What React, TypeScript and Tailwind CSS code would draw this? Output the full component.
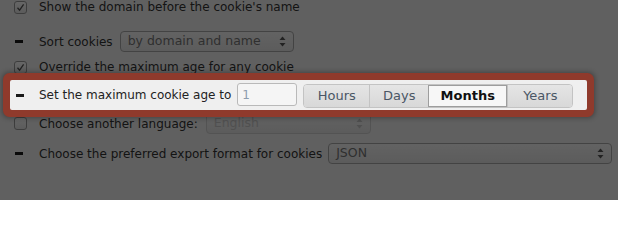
import React from "react";

function Check({ checked }: { checked?: boolean }) {
  return (
    <div className="shrink-0 w-[13px] h-[13px] rounded-[3px] border border-[#9a9a9a] bg-gradient-to-b from-[#ffffff] to-[#e4e4e4] flex items-center justify-center">
      {checked && (
        <svg width="9" height="9" viewBox="0 0 9 9">
          <path d="M1.5 4.8 L3.6 7.2 L7.6 1.4" fill="none" stroke="#555" strokeWidth="1.3" />
        </svg>
      )}
    </div>
  );
}

function Dash() {
  return (
    <div className="shrink-0 w-[13px] flex">
      <div className="ml-[1px] w-[8px] h-[3px] bg-[#1a1a1a]" />
    </div>
  );
}

function Arrows({ color }: { color: string }) {
  return (
    <svg width="7" height="11" viewBox="0 0 7 11">
      <path d="M3.5 0.5 L6.5 4 L0.5 4 Z" fill={color} />
      <path d="M3.5 10.5 L6.5 7 L0.5 7 Z" fill={color} />
    </svg>
  );
}

function Select({ label, width, disabled }: { label: string; width: string; disabled?: boolean }) {
  return (
    <div
      className={`shrink-0 ${width} h-[21px] rounded-[4px] border bg-gradient-to-b from-[#f6f6f6] to-[#e6e6e6] flex items-center justify-between pl-[7px] pr-[7px] text-[12.5px] ${
        disabled ? "text-[#c8c8c8] border-[#cfcfcf]" : "text-[#777] border-[#a8a8a8]"
      }`}
    >
      <span>{label}</span>
      <Arrows color={disabled ? "#c6c6c6" : "#555"} />
    </div>
  );
}

const units = ["Hours", "Days", "Months", "Years"];

export default function App() {
  return (
    <div
      className="relative w-[618px] h-[200px] overflow-hidden bg-[#f0f0f0] text-[12px] text-[#333] whitespace-nowrap"
      style={{ fontFamily: '"DejaVu Sans", sans-serif' }}
    >
      <div className="flex flex-col pl-[14px]">
        <div className="mt-[-5px] h-[24px] flex items-center gap-[12px]">
          <Check checked />
          <span>Show the domain before the cookie's name</span>
        </div>
        <div className="mt-[9px] h-[27px] flex items-center gap-[12px]">
          <Dash />
          <span>Sort cookies</span>
          <div className="-ml-[5px]">
            <Select label="by domain and name" width="w-[174px]" />
          </div>
        </div>
        <div className="h-[24px] flex items-center gap-[12px]">
          <Check checked />
          <span>Override the maximum age for any cookie</span>
        </div>

        <div className="relative z-20 -ml-[4px] mt-[1px] w-[577px] h-[30px] pl-[5px] flex items-center rounded-[2px] bg-[#efefef] shadow-[0_0_0_7px_#8f3a2c,0_0_5px_8px_rgba(0,0,0,0.3)]">
          <Dash />
          <span className="ml-[11px] text-[#222]">Set the maximum cookie age to</span>
          <div className="shrink-0 ml-[6px] w-[60px] h-[23px] -mt-[1px] rounded-[3px] border border-[#b9b9b9] bg-[#f5f5f5] flex items-center pl-[4px] text-[#8d9cae]">
            1
          </div>
          <div className="shrink-0 ml-[6px] mt-[2px] h-[24px] flex rounded-[4px] border border-[#c3c3c3] overflow-hidden text-[13px]">
            {units.map((u, i) => {
              const active = u === "Months";
              const w = ["w-[65px]", "w-[59px]", "w-[79px]", "w-[65px]"][i];
              return (
                <div
                  key={u}
                  className={`${w} flex items-center justify-center ${i > 0 ? "border-l" : ""} ${
                    active
                      ? "bg-[#f7f7f7] border border-[#9d9d9d] font-bold text-[#111]"
                      : "bg-gradient-to-b from-[#e5e5e5] to-[#d8d8d8] border-[#c3c3c3] text-[#4a5665]"
                  }`}
                >
                  {u}
                </div>
              );
            })}
          </div>
        </div>

        <div className="mt-[1px] h-[25px] flex items-center gap-[12px]">
          <Check />
          <span>Choose another language:</span>
          <div className="-ml-[4px]">
            <Select label="English" width="w-[165px]" disabled />
          </div>
        </div>
        <div className="mt-[5px] h-[25px] flex items-center gap-[12px]">
          <Dash />
          <span>Choose the preferred export format for cookies</span>
          <div className="-ml-[6px]">
            <Select label="JSON" width="w-[284px]" />
          </div>
        </div>
      </div>

      <div className="absolute inset-0 z-10 bg-black/60" />
    </div>
  );
}
